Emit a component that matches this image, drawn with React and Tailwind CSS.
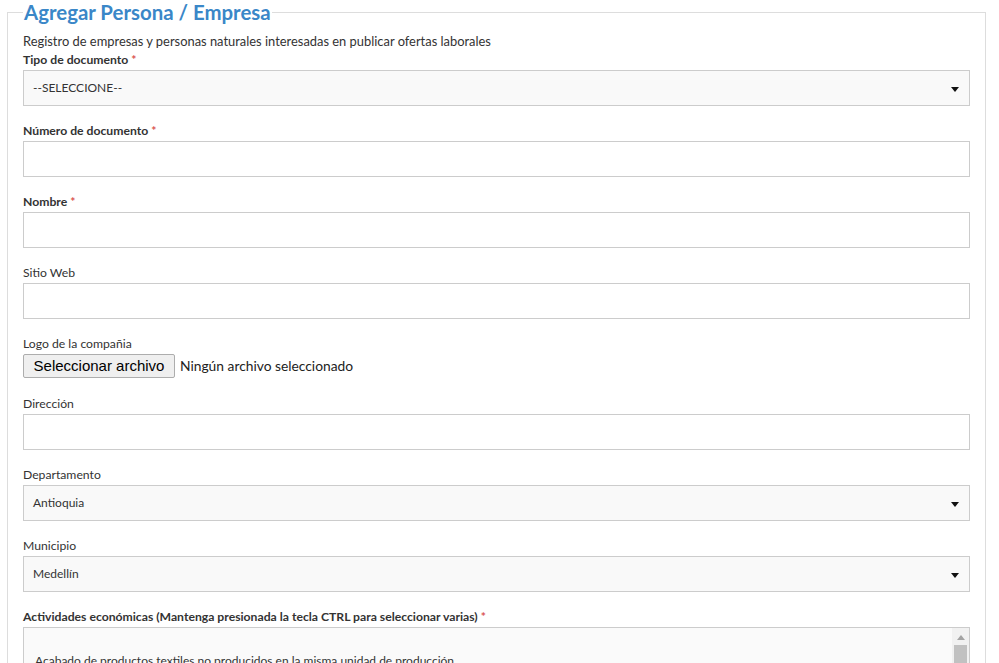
import React from 'react';

const font = { fontFamily: 'Lato, "Open Sans", sans-serif' };

const Label = ({ children, bold, required }) => (
    <div className={`text-[12.2px] leading-[17px] pt-[1px] mb-[2px] text-[#333] ${bold ? 'font-bold' : ''}`}>
        {children}
        {required && <span className="text-[#d9534f] ml-[3px]">*</span>}
    </div>
);

const Caret = () => (
    <svg width="8" height="5" viewBox="0 0 8 5" className="absolute right-[10px] top-[16px]">
        <path d="M0 0h8L4 5z" fill="#111" />
    </svg>
);

const SelectBox = ({ value }) => (
    <div className="relative h-[36px] border border-[#ccc] bg-[#f9f9f9] flex items-center pl-[9px] text-[12px] text-[#333]">
        {value}
        <Caret />
    </div>
);

const TextBox = () => <div className="h-[36px] border border-[#ccc] bg-white" />;

const Field = ({ label, bold, required, children }) => (
    <div className="mb-[15px]">
        <Label bold={bold} required={required}>{label}</Label>
        {children}
    </div>
);

export default function App() {
    return (
        <div className="h-[663px] overflow-hidden bg-white" style={font}>
            <fieldset className="border border-[#ddd] ml-[7px] mr-[13px] px-[15px] pb-[20px]">
                <legend className="px-[1px] text-[20.4px] leading-[24px] font-bold text-[#3a87c8]">
                    Agregar Persona / Empresa
                </legend>

                <p className="mt-[9px] text-[12.9px] leading-[17px] text-[#333]">
                    Registro de empresas y personas naturales interesadas en publicar ofertas laborales
                </p>

                <Field label="Tipo de documento" bold required>
                    <SelectBox value="--SELECCIONE--" />
                </Field>

                <Field label="Número de documento" bold required>
                    <TextBox />
                </Field>

                <Field label="Nombre" bold required>
                    <TextBox />
                </Field>

                <Field label="Sitio Web">
                    <TextBox />
                </Field>

                <div className="mb-[16px]">
                    <Label>Logo de la compañia</Label>
                    <div className="flex items-center h-[24px]">
                        <span
                            className="h-[24px] w-[152px] flex items-center justify-center border border-[#adadad] bg-[#efefef] rounded-[2px] text-[15px] text-black"
                            style={{ fontFamily: '"Liberation Sans", Arial, sans-serif' }}
                        >
                            Seleccionar archivo
                        </span>
                        <span className="ml-[5px] text-[13.8px] text-[#222]">Ningún archivo seleccionado</span>
                    </div>
                </div>

                <Field label="Dirección">
                    <TextBox />
                </Field>

                <Field label="Departamento">
                    <SelectBox value="Antioquia" />
                </Field>

                <Field label="Municipio">
                    <SelectBox value="Medellín" />
                </Field>

                <Field label="Actividades económicas (Mantenga presionada la tecla CTRL para seleccionar varias)" bold required>
                    <div className="relative h-[120px] border border-[#ccc] bg-[#fafafa] overflow-hidden">
                        <div className="pl-[11px] pr-[24px] pt-[24px] text-[12px] leading-[17px] text-[#333]">
                            <div>Acabado de productos textiles no producidos en la misma unidad de producción</div>
                            <div>Acabado y terminación de edificaciones</div>
                        </div>
                        <div className="absolute right-0 top-0 bottom-0 w-[17px] bg-[#f1f1f1]">
                            <svg width="8" height="5" viewBox="0 0 8 5" className="absolute left-[5px] top-[7px]">
                                <path d="M4 0l4 5H0z" fill="#a3a3a3" />
                            </svg>
                            <div className="absolute left-[2px] right-[2px] top-[17px] h-[60px] bg-[#c1c1c1]" />
                        </div>
                    </div>
                </Field>
            </fieldset>
        </div>
    );
}
